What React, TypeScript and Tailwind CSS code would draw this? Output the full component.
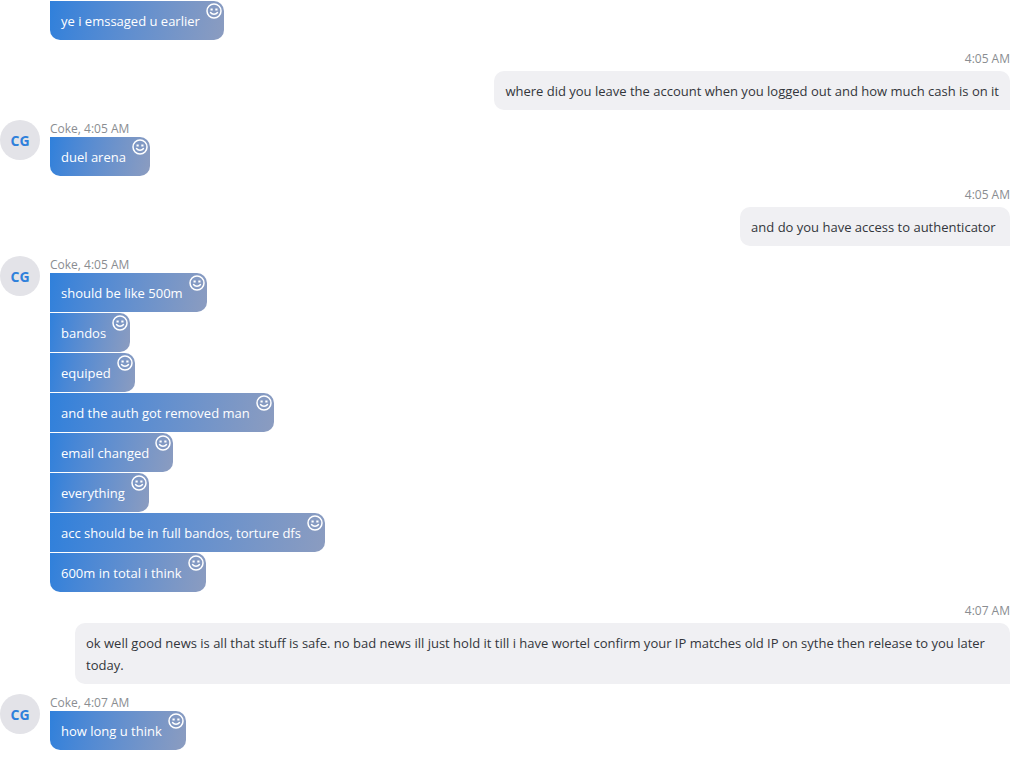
type Message = {
    id: number;
    text: string;
};

type MessageGroup = {
    id: number;
    direction: 'incoming' | 'outgoing';
    time?: string;
    messages: Message[];
};

const CONTACT = { name: 'Coke', initials: 'CG' };

const groups: MessageGroup[] = [
    { id: 1, direction: 'incoming', messages: [{ id: 1, text: 'ye i emssaged u earlier' }] },
    {
        id: 2,
        direction: 'outgoing',
        time: '4:05 AM',
        messages: [
            {
                id: 2,
                text: 'where did you leave the account when you logged out and how much cash is on it',
            },
        ],
    },
    { id: 3, direction: 'incoming', time: '4:05 AM', messages: [{ id: 3, text: 'duel arena' }] },
    {
        id: 4,
        direction: 'outgoing',
        time: '4:05 AM',
        messages: [{ id: 4, text: 'and do you have access to authenticator ' }],
    },
    {
        id: 5,
        direction: 'incoming',
        time: '4:05 AM',
        messages: [
            { id: 5, text: 'should be like 500m' },
            { id: 6, text: 'bandos' },
            { id: 7, text: 'equiped' },
            { id: 8, text: 'and the auth got removed man' },
            { id: 9, text: 'email changed' },
            { id: 10, text: 'everything' },
            { id: 11, text: 'acc should be in full bandos, torture dfs' },
            { id: 12, text: '600m in total i think' },
        ],
    },
    {
        id: 6,
        direction: 'outgoing',
        time: '4:07 AM',
        messages: [
            {
                id: 13,
                text: 'ok well good news is all that stuff is safe. no bad news ill just hold it till i have wortel confirm your IP matches old IP on sythe then release to you later today.',
            },
        ],
    },
    { id: 7, direction: 'incoming', time: '4:07 AM', messages: [{ id: 14, text: 'how long u think' }] },
];

function SmileIcon() {
    return (
        <svg viewBox="0 0 16 16" className="size-4" fill="none" stroke="currentColor" aria-hidden="true">
            <circle cx="8" cy="8" r="7" strokeWidth="1.5" />
            <path d="M4.5 9.5c.8 1.2 2 1.8 3.5 1.8s2.7-.6 3.5-1.8" strokeWidth="1.4" strokeLinecap="round" />
            <path d="M4.500 6.500h2.200M9.300 6.500h2.200" strokeWidth="1.8" />
        </svg>
    );
}

function IncomingBubble({ message, isLast }: { message: Message; isLast: boolean }) {
    return (
        <div
            className={`relative rounded-r-[10px] bg-linear-100 from-[#2f80db] to-[#8b9cc0] pt-[9px] pr-6 pb-2 pl-[11px] text-white ${
                isLast ? 'rounded-bl-[10px]' : ''
            }`}
        >
            {message.text}
            <button type="button" aria-label="React to message" className="absolute top-[2px] right-[2px]">
                <SmileIcon />
            </button>
        </div>
    );
}

function IncomingGroup({ group }: { group: MessageGroup }) {
    return (
        <div className="flex gap-[10px]">
            <div className="w-10 shrink-0">
                {group.time && (
                    <div className="flex size-10 items-center justify-center rounded-full bg-[#e3e3e8] pt-px text-sm font-bold text-[#2f80db]">
                        {CONTACT.initials}
                    </div>
                )}
            </div>
            <div className="flex min-w-0 flex-col items-start">
                {group.time && (
                    <div className="text-xs leading-[17px] text-[#8a8d91]">
                        {CONTACT.name}, {group.time}
                    </div>
                )}
                <div className="flex flex-col items-start gap-px">
                    {group.messages.map((message, i) => (
                        <IncomingBubble
                            key={message.id}
                            message={message}
                            isLast={i === group.messages.length - 1}
                        />
                    ))}
                </div>
            </div>
        </div>
    );
}

function OutgoingGroup({ group }: { group: MessageGroup }) {
    return (
        <div className="flex flex-col items-end gap-1 pl-[75px]">
            <div className="text-xs leading-[17px] text-[#8a8d91]">{group.time}</div>
            {group.messages.map((message) => (
                <div
                    key={message.id}
                    className="rounded-t-[10px] rounded-bl-[10px] bg-[#f0f0f3] px-[11px] pt-[9px] pb-2 whitespace-pre-wrap text-[#33363b]"
                >
                    {message.text}
                </div>
            ))}
        </div>
    );
}

export default function App() {
    return (
        <main className="flex min-h-screen flex-col gap-[10px] bg-white pt-px pr-[21px] font-['Open_Sans',sans-serif] text-[13px] leading-[22px]">
            {groups.map((group) =>
                group.direction === 'incoming' ? (
                    <IncomingGroup key={group.id} group={group} />
                ) : (
                    <OutgoingGroup key={group.id} group={group} />
                )
            )}
        </main>
    );
}
